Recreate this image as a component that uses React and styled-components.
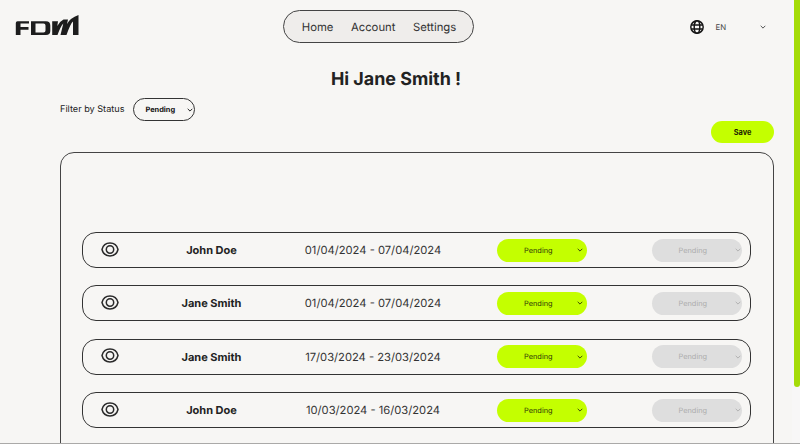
import React from "react";
import styled, { createGlobalStyle } from "styled-components";

const GlobalStyle = createGlobalStyle`
  *, *::before, *::after { box-sizing: border-box; }
  body { margin: 0; overflow: hidden; background: #f7f6f4; color: #222; font-family: Inter, sans-serif; text-rendering: geometricPrecision; }
`;

const Window = styled.div`
  display: flex;
  height: 444px;
  overflow: hidden;
  border-bottom: 1px solid #aaa9a8;
`;

const Page = styled.div`
  flex: 1;
  min-width: 0;
  overflow: hidden;
`;

const ScrollTrack = styled.div`
  width: 8px;
  flex: none;
  padding-left: 2px;
  background: #f8f7f7;
`;

const ScrollThumb = styled.div`
  height: 387px;
  background: #a5dc08;
  border-radius: 0 0 3px 3px;
`;

const Header = styled.header`
  display: grid;
  grid-template-columns: 268px 191px 1fr;
  align-items: center;
  height: 53px;
  padding-left: 15px;
`;

const Logo = styled.svg`
  display: block;
  width: 64px;
  height: 21px;
  margin-top: -2px;
`;

const Nav = styled.nav`
  display: flex;
  justify-content: center;
  align-items: center;
  gap: 17.5px;
  height: 33px;
  padding-left: 1px;
  border: 1px solid #444;
  border-radius: 17px;
  background: #efedeb;
`;

const NavLink = styled.a`
  font-size: 11.3px;
  line-height: 16px;
  color: #333;
`;

const Language = styled.div`
  display: flex;
  align-items: center;
  padding-left: 215.5px;
  font-size: 7.8px;
  color: #444;
`;

const Globe = styled.svg`
  width: 14px;
  height: 14px;
  margin-right: 12px;
`;

const Code = styled.span`
  width: 44px;
`;

const Chevron = styled.svg`
  width: 6px;
  height: 6px;
  flex: none;
  fill: none;
  stroke: currentColor;
  stroke-width: 0.9;
`;

const Title = styled.h1`
  margin: 16px 0 0;
  height: 22px;
  font-size: 17.9px;
  line-height: 22px;
  font-weight: 700;
  text-align: center;
`;

const Filter = styled.div`
  display: flex;
  align-items: center;
  gap: 9px;
  height: 23px;
  margin: 7px 0 0 60px;
`;

const FilterLabel = styled.span`
  font-size: 9.15px;
  white-space: nowrap;
`;

const FilterSelect = styled.div`
  display: flex;
  align-items: center;
  justify-content: space-between;
  width: 62px;
  height: 23px;
  padding: 0 1px 0 11px;
  border: 1px solid #333;
  border-radius: 12px;
  font-size: 7.4px;
  font-weight: 700;
  color: #111;
`;

const Toolbar = styled.div`
  display: flex;
  justify-content: flex-end;
  padding-right: 18px;
`;

const SaveButton = styled.button`
  width: 63px;
  height: 22px;
  padding: 0;
  border: 0;
  border-radius: 11px;
  background: #c4ff00;
  font: 700 7.4px Inter, sans-serif;
  color: #1d2500;
`;

const Panel = styled.main`
  display: flex;
  flex-direction: column;
  gap: 17.4px;
  width: 714px;
  height: 320px;
  margin: 9px 0 0 60px;
  padding: 79px 22px 0 21px;
  border: 1px solid #444;
  border-radius: 14px;
`;

const Row = styled.article`
  display: grid;
  grid-template-columns: 52px 153px 170px 1fr 1fr;
  align-items: center;
  width: 669px;
  height: 36px;
  flex: none;
  border: 1px solid #333;
  border-radius: 14px;
`;

const Eye = styled.svg`
  width: 18px;
  height: 15px;
  margin: -2px 0 0 17.5px;
  fill: none;
  stroke: #2a2a2a;
  stroke-width: 1.5;
`;

const Name = styled.strong`
  font-size: 11px;
  font-weight: 700;
  text-align: center;
`;

const Period = styled.span`
  font-size: 11.2px;
  color: #333;
  text-align: center;
`;

const StatusSelect = styled.div`
  display: flex;
  align-items: center;
  justify-content: space-between;
  justify-self: end;
  width: 90px;
  height: 23px;
  margin-right: ${(p) => (p.$disabled ? "8.5px" : "17px")};
  padding: 0 ${(p) => (p.$disabled ? "1px" : "4px")} 0 27px;
  border-radius: 12px;
  background: ${(p) => (p.$disabled ? "#dedede" : "#c4ff00")};
  color: ${(p) => (p.$disabled ? "#adadad" : "#303a08")};
  font-size: 7.4px;
`;

const Arrow = () => (
  <Chevron viewBox="0 0 6 6"><path d="M.7 1.800L3 4.100L5.300 1.800" /></Chevron>
);

const timesheets = [
  ["John Doe", "01/04/2024 - 07/04/2024"],
  ["Jane Smith", "01/04/2024 - 07/04/2024"],
  ["Jane Smith", "17/03/2024 - 23/03/2024"],
  ["John Doe", "10/03/2024 - 16/03/2024"],
];

export default function App() {
  return (
    <Window>
      <GlobalStyle />
      <Page>
        <Header>
          <Logo viewBox="0 0 64 21" fill="#1d1d1d" role="img" aria-label="FDM">
            <path d="M.8 8Q.8 6.200 2.500 6.200H14V8.600H5.500V12H13.500V14.700H5.500V20H.8Z" />
            <path fillRule="evenodd" d="M16 6.200H31Q35.300 6.200 35.300 10.500V16Q35.300 20 31 20H16ZM20.500 8.600V17.600H28.500Q30.500 17.600 30.500 15.600V10.500Q30.500 8.600 28.500 8.600Z" />
            <path d="M37.200 6.200H43L42.300 11Q44.500 6.500 48.500 4.500H53L52 9Q55 3 63.500 0V20H58V6.500Q55.500 8.500 51.500 20H45.500L48.300 8.500Q45.500 11.500 42.500 20H37.200Z" />
          </Logo>
          <Nav>
            <NavLink>Home</NavLink>
            <NavLink>Account</NavLink>
            <NavLink>Settings</NavLink>
          </Nav>
          <Language>
            <Globe viewBox="0 0 14 14" fill="none" stroke="#151515" strokeWidth="1.45">
              <circle cx="7" cy="7" r="6.200" />
              <ellipse cx="7" cy="7" rx="2.800" ry="6.200" />
              <path d="M1.200 5H12.800M1.200 9H12.800" />
            </Globe>
            <Code>EN</Code>
            <Arrow />
          </Language>
        </Header>
        <Title>Hi Jane Smith !</Title>
        <Filter>
          <FilterLabel>Filter by Status</FilterLabel>
          <FilterSelect>Pending<Arrow /></FilterSelect>
        </Filter>
        <Toolbar><SaveButton>Save</SaveButton></Toolbar>
        <Panel>
          {timesheets.map(([name, period], i) => (
            <Row key={i}>
              <Eye viewBox="0 0 18 15">
                <path d="M1 7.500C2 3.500 5 1.100 9 1.100S16 3.500 17 7.500C16 11.500 13 13.900 9 13.900S2 11.500 1 7.500Z" />
                <circle cx="9" cy="7.500" r="3.700" />
              </Eye>
              <Name>{name}</Name>
              <Period>{period}</Period>
              <StatusSelect>Pending<Arrow /></StatusSelect>
              <StatusSelect $disabled>Pending<Arrow /></StatusSelect>
            </Row>
          ))}
        </Panel>
      </Page>
      <ScrollTrack><ScrollThumb /></ScrollTrack>
    </Window>
  );
}
